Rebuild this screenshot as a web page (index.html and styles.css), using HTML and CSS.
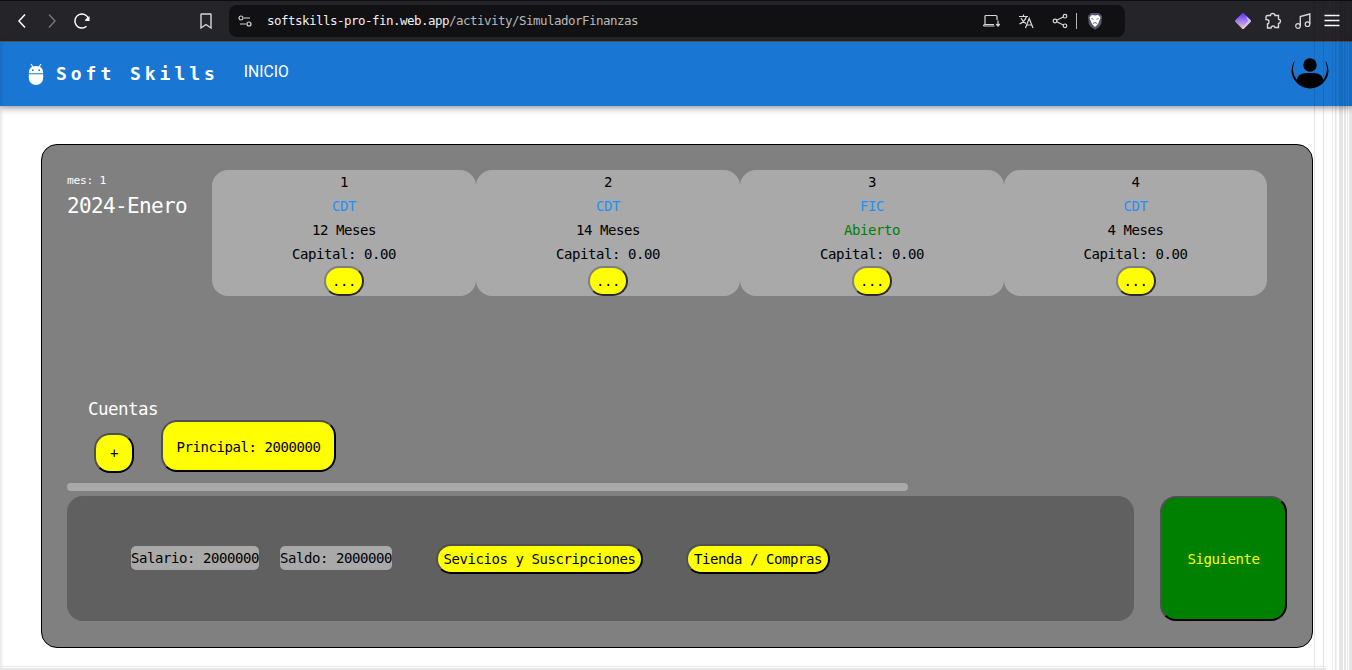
FILE: index.html
```html
<!DOCTYPE html>
<html lang="es">
<head>
<meta charset="utf-8">
<title>Soft Skills</title>
<link rel="stylesheet" href="styles.css">
</head>
<body>
<header class="browser">
  <svg class="icon back" width="20" height="20" viewBox="0 0 20 20"><path d="M13 3.5 7 10l6 6.5" stroke-width="1.5"/></svg>
  <svg class="icon forward" width="20" height="20" viewBox="0 0 20 20"><path d="M7 3.5 13 10l-6 6.5" stroke-width="1.4"/></svg>
  <svg class="icon reload" width="20" height="20" viewBox="0 0 20 20"><path d="M14.500 15.300A7 7 0 1 1 16.600 8" stroke-width="1.500"/><path class="solid" d="M17.500 5v5h-4.200q-.6-1.500.6-2z"/></svg>
  <svg class="icon bookmark" width="20" height="20" viewBox="0 0 20 20"><path d="M5.500 3h9q.5 0 .5.500V17L10 13.500 5 17V3.500q0-.5.500-.5z" stroke-width="1.400"/></svg>
  <div class="address">
    <svg class="icon" width="16" height="16" viewBox="0 0 16 16"><circle cx="4" cy="5" r="2"/><path d="M7 5h6M3 11h6"/><circle cx="12" cy="11" r="2"/></svg>
    <span class="url"><span class="host">softskills-pro-fin.web.app</span>/activity/SimuladorFinanzas</span>
    <div class="address-tools">
      <svg class="icon" width="18" height="16" viewBox="0 0 18 16"><path d="M3 11V3.500q0-1 1-1h10q1 0 1 1V7M1.500 13h11M1.500 13q0-1.500 1.500-1.500h9M16 7.500v5M14.200 11l1.800 2 1.800-2"/></svg>
      <svg class="icon" width="16" height="16" viewBox="0 0 16 16"><path d="M1 3.500h9M5.500 1.500v2M8.500 3.500Q7 8.500 1.500 11M3 5q1.500 3.500 5 5.500M7.500 15l3.700-9.500L15 15M8.800 12h5"/></svg>
      <svg class="icon" width="16" height="16" viewBox="0 0 16 16"><circle cx="3" cy="8" r="1.800"/><circle cx="13" cy="3.200" r="1.800"/><circle cx="13" cy="12.800" r="1.800"/><path d="m4.700 7.200 6.600-3.200M4.700 8.800l6.600 3.200"/></svg>
      <i class="divider"></i>
      <svg width="16" height="18" viewBox="0 0 16 18"><path fill="#55566c" d="m4 1 8 0 3 3-.7 8Q12 16 8 17.800 4 16 1.700 12L1 4z"/><path fill="#fff" d="m4.800 3 3.200.5 3.200-.5L13.500 5.500l-1 3-1.500 3.500L8 15l-3-3-1.500-3.500-1-3z"/><path fill="none" stroke="#55566c" stroke-width=".9" d="m4.500 6.500 2 .8M11.500 6.500l-2 .8M6 11.500l2-1 2 1"/></svg>
    </div>
  </div>
  <div class="browser-tools">
    <svg width="18" height="18" viewBox="0 0 18 18"><defs><linearGradient id="gem" x1="0" y1="0" x2="0" y2="1"><stop offset=".1" stop-color="#6d3df5"/><stop offset=".55" stop-color="#a487f2"/><stop offset="1" stop-color="#ffc3a0"/></linearGradient></defs><path fill="url(#gem)" d="M8 1.500q1-1 2 0L16.500 8q1 1 0 2L10 16.500q-1 1-2 0L1.500 10q-1-1 0-2z"/><path fill="#dccbff" opacity=".8" d="m12 4 4.500 4q1 1 0 2L10 16.500q-1 1-2 0L14 9z"/></svg>
    <svg class="icon" width="18" height="18" viewBox="0 0 18 18"><path stroke-width="1.400" d="M3.500 3.500H6.500Q6.500 1.500 8.700 1.500T11 3.500h3.500V7q2 .3 2 2.200T14.500 11.500V15.500H11Q10.700 14 9 14T7 16H3.500V12Q5 11.500 5 9.500T2 7.500V5q0-1.500 1.500-1.500z"/></svg>
    <svg class="icon" width="18" height="18" viewBox="0 0 18 18"><circle cx="4" cy="14" r="2.300"/><circle cx="13.500" cy="12.200" r="2.300"/><path stroke-width="1.400" d="M6.300 14V4.500L15.800 2v10"/></svg>
    <svg class="icon" width="16" height="16" viewBox="0 0 16 16"><path stroke="#fff" stroke-width="1.400" d="M.5 2.500h15M.5 7.500h15M.5 12.500h15"/></svg>
  </div>
</header>
<nav class="navbar">
  <svg class="android" width="16" height="24" viewBox="0 0 16 24"><path fill="none" stroke="#fff" stroke-width="1.200" d="m3 2 2 3M13 2l-2 3"/><path fill="#fff" d="M.8 11.200Q.8 4 8 4t7.200 7.200zM.8 12.300h14.400v3.500a7.200 7.200 0 0 1-14.400 0z"/><path fill="#1976d2" d="M4 7.500h1.600v1.600H4zM10.400 7.500H12v1.600h-1.600z"/></svg>
  <span class="brand">Soft Skills</span>
  <a class="nav-link">INICIO</a>
  <svg class="avatar" width="38" height="38" viewBox="0 0 38 38"><defs><clipPath id="disc"><circle cx="19" cy="19" r="18.500"/></clipPath></defs><circle cx="19" cy="14" r="6.700"/><path clip-path="url(#disc)" d="M5.500 32Q5.500 22 15 22h8q9.500 0 9.500 10v6h-27z"/><path d="M3 10.500Q-3 22 5.500 31.500l1-1.500Q-.8 20 3.700 10.500zM35 10.500q6 11.500-2.500 21l-1-1.500Q38.800 20 34.300 10.500z"/></svg>
</nav>
<main class="page">
  <section class="board">
    <div class="top">
      <div class="date"><div class="month">mes: 1</div><div class="period">2024-Enero</div></div>
      <div class="investments">
        <article class="investment"><span>1</span><span class="kind">CDT</span><span>12 Meses</span><span>Capital: 0.00</span><button class="btn more">...</button></article>
        <article class="investment"><span>2</span><span class="kind">CDT</span><span>14 Meses</span><span>Capital: 0.00</span><button class="btn more">...</button></article>
        <article class="investment"><span>3</span><span class="kind">FIC</span><span class="open">Abierto</span><span>Capital: 0.00</span><button class="btn more">...</button></article>
        <article class="investment"><span>4</span><span class="kind">CDT</span><span>4 Meses</span><span>Capital: 0.00</span><button class="btn more">...</button></article>
      </div>
    </div>
    <div class="accounts">
      <h2 class="accounts-title">Cuentas</h2>
      <div class="account-list"><button class="btn add">+</button><button class="btn account">Principal: 2000000</button></div>
    </div>
    <div class="scroll"></div>
    <div class="bottom">
      <div class="panel">
        <span class="chip">Salario: 2000000</span>
        <span class="chip">Saldo: 2000000</span>
        <button class="btn services">Sevicios y Suscripciones</button>
        <button class="btn store">Tienda / Compras</button>
      </div>
      <button class="btn next">Siguiente</button>
    </div>
  </section>
</main>
<div class="edge-left"></div>
<div class="edge-right"></div>
<div class="edge-bottom"></div>
</body>
</html>
```
FILE: styles.css
```css
* { box-sizing: border-box; }
body {
  margin: 0;
  height: 670px;
  overflow: hidden;
  background: #fff;
  color: #000;
  font: 14px/24px "DejaVu Sans Mono", monospace;
  letter-spacing: -.43px;
}
svg { display: block; flex: none; }

.browser {
  display: flex;
  align-items: center;
  height: 42px;
  padding: 0 12px;
  background: #252429;
  border-top: 1px solid #0e0d11;
  border-bottom: 1px solid #555459;
}
.icon { fill: none; stroke: #d8d8dc; stroke-width: 1.2; }
.icon .solid { fill: #fff; stroke: none; }
.back, .reload { stroke: #fff; }
.forward { margin-left: 10px; stroke: #77767b; }
.reload { margin-left: 10px; }
.bookmark { margin-left: 104px; }
.address {
  display: flex;
  align-items: center;
  width: 896px;
  height: 32px;
  margin-left: 13px;
  padding: 0 22px 0 8px;
  border-radius: 8px;
  background: #111113;
}
.url { margin-left: 14px; color: #b9b9bc; font-size: 12.5px; letter-spacing: -.525px; white-space: pre; }
.host { color: #f0f0f2; }
.address-tools { display: flex; align-items: center; gap: 18px; margin-left: auto; }
.divider { width: 1px; height: 16px; margin: 0 -8px 0 -10px; background: #b4b4b8; }
.browser-tools { display: flex; align-items: center; gap: 12px; margin-left: auto; }

.navbar {
  position: relative;
  display: flex;
  align-items: center;
  height: 64px;
  padding: 0 23px 0 28px;
  background: #1976d2;
  color: #fff;
  box-shadow: 0 2px 4px -1px rgba(0,0,0,.2), 0 4px 5px rgba(0,0,0,.14), 0 1px 10px rgba(0,0,0,.12);
}
.brand { margin-left: 12px; font-size: 18px; font-weight: 700; letter-spacing: 3.96px; white-space: pre; }
.nav-link { margin: -5px 0 0 25px; font: 400 15.7px/24px Roboto, sans-serif; letter-spacing: 0; }
.avatar { margin: -9px 0 0 auto; }

.page { padding: 38px 39px 0 41px; }
.board {
  width: 1272px;
  height: 504px;
  padding: 25px;
  border: 1px solid #000;
  border-radius: 16px;
  background: #808080;
}
.top { display: flex; height: 229px; }
.date { width: 145px; padding-top: 1px; color: #fff; }
.month { height: 20px; font-size: 11.3px; line-height: 20px; letter-spacing: -.3px; }
.period { font-size: 21px; line-height: 31px; letter-spacing: -.64px; }
.investments { display: flex; height: 126px; }
.investment {
  display: flex;
  flex-direction: column;
  align-items: center;
  width: 264px;
  border-radius: 16px;
  background: #a9a9a9;
}
.investment:last-child { width: 263px; }
.kind { color: #1e90ff; }
.open { color: green; }
.btn {
  padding: 0;
  border: 2px solid;
  border-color: #505050 #000 #000 #505050;
  border-radius: 16px;
  background: #ff0;
  color: #000;
  font: inherit;
  letter-spacing: inherit;
}
.more { width: 40px; height: 30px; border-color: #808080 #2b2b2b #2b2b2b #808080; }

.accounts { height: 84px; }
.accounts-title { margin: 0 0 0 21px; color: #fff; font-size: 17.5px; font-weight: 400; line-height: 20px; letter-spacing: -.53px; }
.account-list { display: flex; align-items: flex-end; gap: 27px; height: 54px; margin-left: 27px; }
.add { width: 40px; height: 40px; }
.account { width: 175px; height: 52px; margin-bottom: 1px; padding-top: 2px; }
.scroll { width: 841px; height: 8px; border-radius: 4px; background: #a9a9a9; }
.bottom { display: flex; gap: 26px; margin-top: 5px; }
.panel {
  display: flex;
  align-items: center;
  width: 1067px;
  height: 125px;
  padding-left: 64px;
  border-radius: 16px;
  background: #606060;
}
.chip { margin: 0 21px 2px 0; border-radius: 5px; background: #a9a9a9; white-space: nowrap; }
.services { width: 207px; height: 30px; margin-left: 23px; }
.store { width: 144px; height: 30px; margin-left: 43px; }
.next { width: 127px; height: 125px; background: green; color: #ff0; }

/* Translucent bands laid over the window edges */
.edge-left {
  position: absolute;
  inset: 42px auto 0 0;
  width: 4px;
  background: linear-gradient(90deg, rgba(0,0,0,.09), transparent);
}
.edge-right {
  position: absolute;
  inset: 0 0 0 auto;
  width: 38px;
  background: linear-gradient(90deg,
    rgba(0,0,0,.1) 0 1px, transparent 1px 9px,
    rgba(0,0,0,.1) 9px 10px, transparent 10px 18px,
    rgba(0,0,0,.08) 18px 19px, transparent 19px 21px,
    rgba(0,0,0,.1) 21px 22px, rgba(0,0,0,.05) 22px 23px, transparent 23px 25px,
    rgba(0,0,0,.1) 25px 29px, transparent 29px 30px,
    rgba(0,0,0,.1) 30px 32px, transparent 32px 33px,
    rgba(0,0,0,.1) 33px 34px, transparent 34px 35px,
    rgba(0,0,0,.1) 35px 38px);
}
.edge-bottom {
  position: absolute;
  inset: 666px 26px 0 0;
  border-top: 1px solid #e6e6e6;
  border-bottom: 2px solid #e6e6e6;
}
```
